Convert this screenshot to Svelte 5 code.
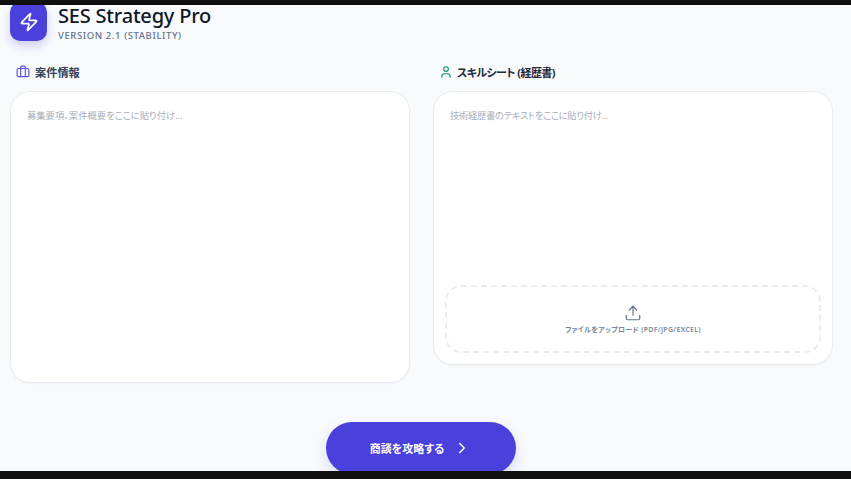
<script>
  const job = '募集要項、案件概要をここに貼り付け...';
  const skill = '技術経歴書のテキストをここに貼り付け...';
</script>

<div class="frame">
  <div class="bar top"></div>
  <main class="page">
    <header class="head">
      <div class="logo">
        <svg width="20" height="20" viewBox="0 0 24 24" fill="none" stroke="#fff" stroke-width="2" stroke-linecap="round" stroke-linejoin="round"><path d="M4 14a1 1 0 0 1-.78-1.63l9.9-10.2a.5.5 0 0 1 .86.46l-1.92 6.02A1 1 0 0 0 13 10h7a1 1 0 0 1 .78 1.63l-9.9 10.2a.5.5 0 0 1-.86-.46l1.92-6.02A1 1 0 0 0 11 14z"/></svg>
      </div>
      <div class="titles">
        <h1>SES Strategy Pro</h1>
        <p>VERSION 2.1 (STABILITY)</p>
      </div>
    </header>

    <section class="cols">
      <div class="col">
        <h2>
          <svg class="ic" width="14" height="14" viewBox="0 0 24 24" fill="none" stroke="#5b54d6" stroke-width="2" stroke-linecap="round" stroke-linejoin="round"><path d="M16 20V4a2 2 0 0 0-2-2h-4a2 2 0 0 0-2 2v16"/><rect width="20" height="14" x="2" y="6" rx="2"/></svg>
          案件情報
        </h2>
        <div class="card left"><div class="ph">{job}</div></div>
      </div>
      <div class="col">
        <h2 class="second">
          <svg class="ic" width="14" height="14" viewBox="0 0 24 24" fill="none" stroke="#059669" stroke-width="2" stroke-linecap="round" stroke-linejoin="round"><path d="M19 21v-2a4 4 0 0 0-4-4H9a4 4 0 0 0-4 4v2"/><circle cx="12" cy="7" r="4"/></svg>
          スキルシート (経歴書)
        </h2>
        <div class="card right">
          <div class="ph grow">{skill}</div>
          <div class="drop">
            <svg width="18" height="18" viewBox="0 0 24 24" fill="none" stroke="#64748b" stroke-width="1.6" stroke-linecap="round" stroke-linejoin="round"><path d="M21 15v4a2 2 0 0 1-2 2H5a2 2 0 0 1-2-2v-4"/><polyline points="17 8 12 3 7 8"/><line x1="12" x2="12" y1="3" y2="15"/></svg>
            <span>ファイルをアップロード (PDF/JPG/EXCEL)</span>
          </div>
        </div>
      </div>
    </section>

    <div class="action">
      <button>
        商談を攻略する
        <svg width="18" height="18" viewBox="0 0 24 24" fill="none" stroke="#fff" stroke-width="2" stroke-linecap="round" stroke-linejoin="round"><path d="m9 18 6-6-6-6"/></svg>
      </button>
    </div>
  </main>
  <div class="bar bottom"></div>
</div>

<style>
  :global(body) { margin: 0; }
  .frame {
    width: 851px;
    height: 479px;
    display: flex;
    flex-direction: column;
    overflow: hidden;
    font-family: "Noto Sans", "Noto Sans CJK JP", sans-serif;
    font-feature-settings: "palt";
    background: #f8fafc;
  }
  .bar { background: #0f0f0f; flex: none; position: relative; z-index: 2; }
  .top { height: 5px; }
  .bottom { height: 8px; }
  .page {
    flex: 1;
    min-height: 0;
    padding: 0 18px 0 10px;
    display: flex;
    flex-direction: column;
  }
  .head {
    display: flex;
    gap: 11px;
    align-items: center;
    margin-top: -3px;
    height: 39px;
    flex: none;
  }
  .logo {
    width: 37px;
    height: 39px;
    background: #4a40dc;
    border-radius: 10px;
    display: flex;
    align-items: center;
    justify-content: center;
    box-shadow: 0 5px 10px rgba(74, 64, 220, .22);
    flex: none;
  }
  .titles { padding-top: 2px; }
  h1 {
    margin: 0;
    font-size: 20px;
    line-height: 25px;
    font-weight: 500;
    color: #0f172a;
    letter-spacing: -.2px;
  }
  .titles p {
    margin: 1px 0 0;
    font-size: 9.5px;
    line-height: 13px;
    letter-spacing: .6px;
    font-weight: 500;
    color: #64748b;
  }
  .cols {
    display: grid;
    grid-template-columns: 400px 400px;
    gap: 23px;
    margin-top: 22px;
    align-items: start;
  }
  .col { display: flex; flex-direction: column; }
  h2 {
    margin: 0 0 10px 6px;
    height: 18px;
    display: flex;
    align-items: center;
    gap: 5px;
    font-size: 11.2px;
    line-height: 20px;
    padding-top: 2px;
    box-sizing: border-box;
    font-weight: 700;
    color: #334155;
  }
  h2.second { color: #1e293b; font-size: 11px; letter-spacing: -.55px; gap: 4px; }
  .ic { flex: none; margin-top: -2px; }
  .card {
    box-sizing: border-box;
    background: #fff;
    border: 1px solid #e8ecf1;
    border-radius: 20px;
    padding: 18px 16px;
    box-shadow: 0 1px 2px rgba(15, 23, 42, .04);
    display: flex;
    flex-direction: column;
  }
  .left { height: 292px; }
  .right { height: 274px; padding-bottom: 11px; padding-left: 11px; padding-right: 11px; }
  .ph {
    font-size: 9.3px;
    line-height: 12px;
    color: #a6aebb;
  }
  .grow { flex: 1; padding-left: 5px; letter-spacing: -.3px; }
  .drop {
    box-sizing: border-box;
    height: 68px;
    flex: none;
    border: 2px dashed #e8ecf2;
    border-radius: 16px;
    display: flex;
    flex-direction: column;
    align-items: center;
    justify-content: center;
    gap: 2px;
    font-size: 7px;
    font-weight: 600;
    letter-spacing: .3px;
    color: #7b8798;
  }
  .action {
    display: flex;
    justify-content: center;
    margin-top: 39px;
    padding-right: 2px;
  }
  button {
    width: 190px;
    height: 52px;
    flex: none;
    border: 0;
    border-radius: 26px;
    background: #4a40dc;
    color: #fff;
    font: 700 11px "Noto Sans", "Noto Sans CJK JP", sans-serif;
    font-feature-settings: "palt";
    display: flex;
    align-items: center;
    justify-content: center;
    gap: 9px;
    box-shadow: 0 6px 14px rgba(74, 64, 220, .18);
    padding: 0;
  }
</style>
